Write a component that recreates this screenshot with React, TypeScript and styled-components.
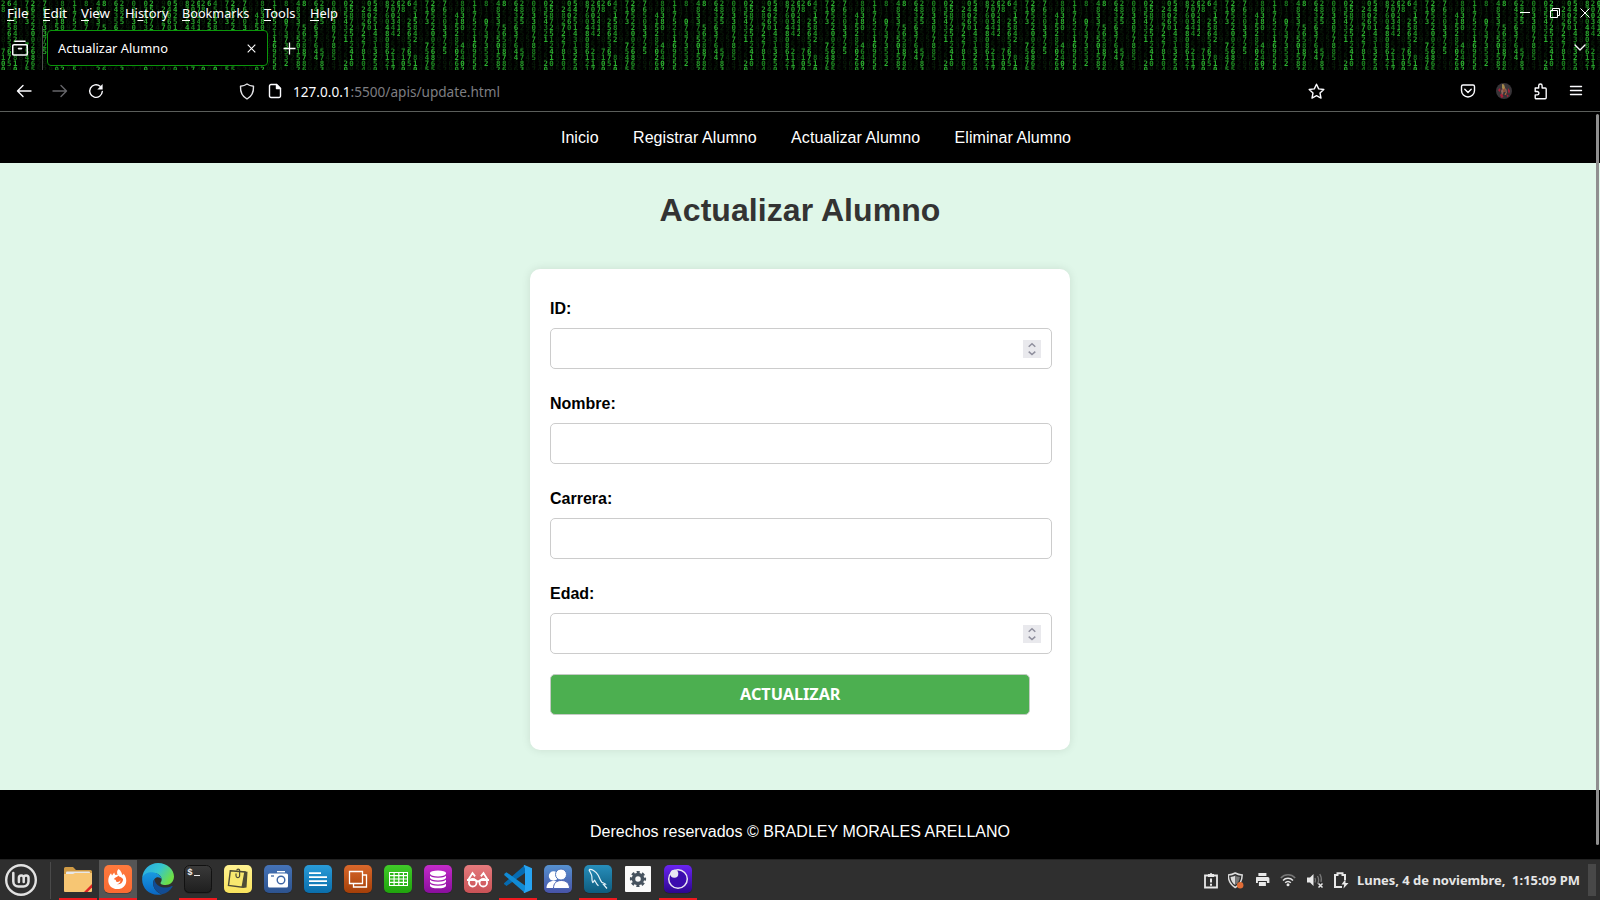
import React from "react";
import styled, { createGlobalStyle } from "styled-components";

const UI_FONT = `"Noto Sans", "Open Sans", sans-serif`;
const PAGE_FONT = `"Liberation Sans", Arial, sans-serif`;

const GlobalStyle = createGlobalStyle`
  * { box-sizing: border-box; }
  body { margin: 0; background: #000; overflow: hidden; }
  svg { display: block; flex: none; }
`;

const Desktop = styled.div`
  width: 1600px;
  height: 900px;
  display: flex;
  flex-direction: column;
  background: #000;
`;

/* ---------- browser chrome ---------- */

const TitleArea = styled.div`
  position: relative;
  height: 70px;
  display: flex;
  flex-direction: column;
  flex: none;
  overflow: hidden;
  color: #fff;
  font-family: ${UI_FONT};
`;

const RainBackdrop = styled.svg`
  position: absolute;
  inset: 0;
`;

const MenuRow = styled.div`
  position: relative;
  height: 26px;
  display: flex;
  padding-left: 7px;
`;

const MenuItem = styled.span<{ $slot: number }>`
  width: ${(p) => p.$slot}px;
  height: 26px;
  flex: none;
`;

const WindowButtons = styled.div`
  margin-left: auto;
  padding: 8px 10px 0 0;
  display: flex;
  gap: 20px;
`;

const TabRow = styled.div`
  position: relative;
  height: 44px;
  display: flex;
  align-items: flex-start;
`;

const ViewButton = styled.div`
  width: 43px;
  height: 44px;
  padding: 13px 0 0 12px;
  border-right: 1px solid #4a4f4a;
`;

const Tab = styled.div`
  margin: 4px 0 0 4px;
  width: 221px;
  height: 36px;
  display: flex;
  align-items: center;
  justify-content: space-between;
  padding: 0 11.5px 0 10px;
  border: 1px solid #0a960a;
  border-radius: 4px;
  background: #000;
`;

const NewTab = styled.div`
  padding: 16px 0 0 15px;
`;

const TabsMenu = styled.div`
  margin-left: auto;
  padding: 18px 14px 0 0;
`;

const Toolbar = styled.div`
  height: 42px;
  flex: none;
  display: flex;
  align-items: center;
  padding: 1px 16px 0 16px;
  border-bottom: 1px solid #5b5e5b;
  background: #000;
`;

const NavButtons = styled.div`
  display: flex;
  gap: 20px;
  width: 223px;
`;

const UrlBar = styled.div`
  display: flex;
  align-items: center;
  width: 1090px;
`;

const PageIcon = styled.svg`
  margin-left: 13px;
`;

const StarIcon = styled.svg`
  margin: 0 4px 0 auto;
`;

const UrlText = styled.div`
  margin-left: 11px;
`;

const ToolButtons = styled.div`
  display: flex;
  align-items: center;
  gap: 20px;
  margin-left: auto;
`;

/* ---------- web page ---------- */

const Page = styled.div`
  position: relative;
  height: 747px;
  flex: none;
  display: flex;
  flex-direction: column;
  background: #e0f7e9;
  font-family: ${PAGE_FONT};
`;

const Scrollbar = styled.div`
  position: absolute;
  right: 1px;
  top: 2px;
  width: 3px;
  height: 731px;
  border-radius: 2px;
  background: #8f8f8f;
`;

const SiteNav = styled.nav`
  height: 51px;
  display: flex;
  justify-content: center;
  gap: 34.4px;
  padding: 17px 0 0 32px;
  background: #000;
  color: #fff;
  font-size: 16px;
  line-height: 18px;
  letter-spacing: 0.06px;
`;

const Heading = styled.h1`
  margin: 29px 0 0;
  font-size: 32px;
  line-height: 37px;
  letter-spacing: 0.06px;
  text-align: center;
  color: #333;
`;

const FormCard = styled.form`
  width: 540px;
  height: 481px;
  margin: 40px auto;
  padding: 30px 20px 0;
  border-radius: 10px;
  background: #fff;
  box-shadow: 0 0 10px rgba(0, 0, 0, 0.1);
`;

const Field = styled.label`
  display: flex;
  flex-direction: column;
  height: 95px;
  font-size: 16px;
  font-weight: bold;
  line-height: 19px;
  color: #000;
`;

const Box = styled.span`
  display: flex;
  align-items: center;
  justify-content: flex-end;
  width: 502px;
  height: 41px;
  margin-top: 10px;
  padding-right: 10px;
  border: 1px solid #ccc;
  border-radius: 5px;
  background: #fff;
`;

const Submit = styled.button`
  display: flex;
  align-items: center;
  justify-content: center;
  width: 480px;
  height: 41px;
  margin-top: -5px;
  padding: 0 0 1px;
  border: 1px solid #c4cbc4;
  border-radius: 5px;
  background: #4caf50;
`;

const Footer = styled.footer`
  height: 69px;
  padding-top: 33px;
  background: #000;
  color: #fff;
  font-size: 16px;
  line-height: 18px;
  letter-spacing: 0.03px;
  text-align: center;
`;

/* ---------- desktop panel ---------- */

const Panel = styled.div`
  height: 41px;
  flex: none;
  display: flex;
  border-top: 1px solid #222;
  background: #2f2f2f;
`;

const StartButton = styled.div`
  width: 51px;
  height: 37px;
  margin: 2px 8px 0 0;
  padding: 2px 0 0 5px;
  border-right: 1px solid #4a4a4a;
`;

const Launchers = styled.div`
  display: flex;
  gap: 2px;
`;

const Launcher = styled.div<{ $open?: boolean; $active?: boolean }>`
  width: 38px;
  height: 40px;
  display: flex;
  align-items: center;
  justify-content: center;
  background: ${(p) => (p.$active ? "#555" : "transparent")};
  border-bottom: 2px solid ${(p) => (p.$open ? "#f0191f" : "transparent")};
`;

const Tray = styled.div`
  margin-left: auto;
  display: flex;
  align-items: center;
  gap: 10.4px;
`;

const Clock = styled.div`
  margin-left: -2.4px;
`;

const Corner = styled.div`
  width: 8px;
  height: 32px;
  margin: 4px 4px 0 8px;
  background: #484848;
`;

const TextSvg = styled.svg`
  overflow: visible;
`;

/* A line of interface text held to an exact advance width. */
function Label(props: {
  text?: string;
  width: number;
  size: number;
  height?: number;
  baseline: number;
  color?: string;
  weight?: number;
  underline?: [number, number];
  children?: React.ReactNode;
}) {
  return (
    <TextSvg width={props.width} height={props.height ?? 20}>
      <text
        x="0"
        y={props.baseline}
        textLength={props.width}
        lengthAdjust="spacingAndGlyphs"
        fontFamily={UI_FONT}
        fontSize={props.size}
        fontWeight={props.weight ?? 400}
        fill={props.color ?? "#fff"}
      >
        {props.children ?? props.text}
      </text>
      {props.underline && (
        <rect x={props.underline[0]} y={props.baseline + 2} width={props.underline[1]} height="1" fill="#fff" />
      )}
    </TextSvg>
  );
}

/* One string per column of the falling digits; a dot is a faded digit. */
const RAIN = [
  "28......7100", "6..25653675.", "4515842..810", "............", "7173...75475", "265220026865",
  "............", "765033725...", "............", "..4152850260", "80380..46402", "............",
  "117521169555", "............", "8..07373532.", "............", "483373501582", "8...56588786",
  "............", "6435637644..", "2825....5783", "............", "0033077885..", "............",
  "0354321...20", "25872512410.", "............", ".28272278104", "04060.......", "542514313250",
  "............", "876048086121", "200344..2117", "072412......",
];
const BRIGHT = ["#1f9423", "#27a52b", "#197f1d", "#2bb52f"];

function Rain() {
  return (
    <RainBackdrop width="1600" height="70" aria-hidden="true">
      <defs>
        <pattern id="rain" width="200" height="70" patternUnits="userSpaceOnUse">
          <rect width="200" height="70" fill="#000" />
          {RAIN.map((col, c) =>
            [...col].map((ch, r) => {
              const dim = ch === ".";
              return (
                <text
                  key={`${c}-${r}`}
                  x={3.3 + c * 5.93}
                  y={6.2 + r * 6}
                  textAnchor="middle"
                  fontFamily="DejaVu Sans Mono, monospace"
                  fontSize="7.4"
                  fontWeight={dim ? 400 : 700}
                  fill={dim ? ((c + r) % 3 ? "#061c07" : "#09290a") : BRIGHT[(c * 3 + (r >> 1)) % 4]}
                >
                  {dim ? (c * 7 + r * 3) % 10 : ch}
                </text>
              );
            })
          )}
        </pattern>
      </defs>
      <rect width="1600" height="70" fill="url(#rain)" />
    </RainBackdrop>
  );
}

const MENU: { text: string; slot: number; width: number; u: [number, number] }[] = [
  { text: "File", slot: 35.5, width: 21.5, u: [0, 7] },
  { text: "Edit", slot: 38.5, width: 24, u: [0, 7] },
  { text: "View", slot: 43.6, width: 29, u: [0, 8] },
  { text: "History", slot: 57.6, width: 43.5, u: [12.4, 6] },
  { text: "Bookmarks", slot: 82, width: 67.3, u: [0, 8] },
  { text: "Tools", slot: 45.6, width: 31.5, u: [0, 7] },
  { text: "Help", slot: 40, width: 28, u: [0, 9] },
];

const stroke = { fill: "none", stroke: "#fbfbfe", strokeWidth: 1.4, strokeLinecap: "round", strokeLinejoin: "round" } as const;

function Spinner() {
  return (
    <svg width="18" height="18" viewBox="0 0 18 18">
      <rect width="18" height="18" fill="#e9e9ed" />
      <path d="M5.7 6.8 9 3.8l3.3 3M5.7 11.6 9 14.6l3.3-3" fill="none" stroke="#8f8f9d" strokeWidth="1.5" />
    </svg>
  );
}

function Tile(props: { id: string; top: string; bottom: string; children?: React.ReactNode }) {
  return (
    <svg width="30" height="30" viewBox="0 0 30 30">
      <defs>
        <linearGradient id={props.id} x1="0" y1="0" x2="0" y2="1">
          <stop offset="0" stopColor={props.top} />
          <stop offset="1" stopColor={props.bottom} />
        </linearGradient>
      </defs>
      <rect x="1" y="1.6" width="28" height="28" rx="5" fill="#1c1c1c" opacity=".6" />
      <rect x="1" y="1" width="28" height="28" rx="5" fill={`url(#${props.id})`} />
      {props.children}
    </svg>
  );
}

function App() {
  return (
    <Desktop>
      <GlobalStyle />
      <TitleArea>
        <Rain />
        <MenuRow>
          {MENU.map((m) => (
            <MenuItem key={m.text} $slot={m.slot}>
              <Label text={m.text} width={m.width} size={13} height={26} baseline={18} underline={m.u} />
            </MenuItem>
          ))}
          <WindowButtons>
            <svg width="10" height="10"><path d="M0 4.5h10" stroke="#fff" /></svg>
            <svg width="10" height="10" fill="none" stroke="#fff"><path d="M.5 2.5h7v7h-7zM2.5 2.5v-2h7v7h-2" /></svg>
            <svg width="10" height="10"><path d="M.5.5l9 9M9.5.5l-9 9" stroke="#fff" /></svg>
          </WindowButtons>
        </MenuRow>
        <TabRow>
          <ViewButton>
            <svg width="16" height="18" viewBox="0 0 16 18" {...stroke} strokeWidth="1.6">
              <path d="M3 2.2h10M2 5.8h12a1.3 1.3 0 0 1 1.3 1.3v7.6a1.3 1.3 0 0 1-1.3 1.3H2A1.3 1.3 0 0 1 .7 14.7V7.1A1.3 1.3 0 0 1 2 5.8ZM6.5 9.6h3" />
            </svg>
          </ViewButton>
          <Tab>
            <Label text="Actualizar Alumno" width={110} size={13} baseline={15} />
            <svg width="9" height="9"><path d="M.7.7l7.6 7.6M8.3.7L.7 8.3" stroke="#fff" strokeWidth="1.1" /></svg>
          </Tab>
          <NewTab>
            <svg width="13" height="13"><path d="M6.5.5v12M.5 6.5h12" stroke="#fff" strokeWidth="1.3" /></svg>
          </NewTab>
          <TabsMenu>
            <svg width="12" height="8" {...stroke}><path d="M1 1l5 5 5-5" /></svg>
          </TabsMenu>
        </TabRow>
      </TitleArea>

      <Toolbar>
        <NavButtons>
          <svg width="16" height="16" {...stroke}><path d="M15 8H1.7M7 2.5L1.5 8 7 13.5" /></svg>
          <svg width="16" height="16" {...stroke} stroke="#66666a"><path d="M1 8h13.3M9 2.5L14.5 8 9 13.5" /></svg>
          <svg width="16" height="16" {...stroke}><path d="M14.3 8.5A6.3 6.3 0 1 1 12.1 3.3" /><path d="M14.6 1v5.4H9.3z" fill="#fbfbfe" stroke="none" /></svg>
        </NavButtons>
        <UrlBar>
          <svg width="16" height="17" {...stroke} stroke="#e3e3e6"><path d="M8 1c2 1.5 4 2 6.500 2.200C14.800 9 12.500 13.500 8 16 3.500 13.500 1.200 9 1.500 3.200 4 3 6 2.500 8 1z" /></svg>
          <PageIcon width="14" height="16" viewBox="0 0 14 16" {...stroke}><path d="M3 1.500h5.500l4 4V13a1.500 1.500 0 0 1-1.500 1.500H3A1.500 1.500 0 0 1 1.500 13V3A1.500 1.500 0 0 1 3 1.500z" /><path d="M8.500 1.500v4h4z" fill="#fff" /></PageIcon>
          <UrlText>
            <Label width={207} size={14.5} baseline={16} color="#7e7e82">
              <tspan fill="#fbfbfe">127.0.0.1</tspan>:5500/apis/update.html
            </Label>
          </UrlText>
          <StarIcon width="17" height="17" viewBox="0 0 17 17" {...stroke}><path d="M8.500 1.200l2.200 4.700 5.100.6-3.800 3.500 1 5.100-4.500-2.500L4 15.100l1-5.100L1.200 6.500l5.100-.6z" /></StarIcon>
        </UrlBar>
        <ToolButtons>
          <svg width="16" height="16" {...stroke}><path d="M3 2h10a1.500 1.500 0 0 1 1.500 1.500V7.500a6.500 6.500 0 0 1-13 0V3.500A1.500 1.500 0 0 1 3 2zM4.800 6.300L8 9.400l3.200-3.100" /></svg>
          <svg width="16" height="16">
            <circle cx="8" cy="8" r="8" fill="#383438" />
            <path d="M6 1l2 .5 1 3-1 2-2-1z" fill="#a38a4d" />
            <path d="M2 7l2-2 .5 2-1 2zM12 5l2 3-1 3-1-3zM4 12l2-2 1.500 4-2 1zM10.500 11l2.500 2-2 1z" fill="#a91f38" />
            <path d="M5 8l1.500-3 1 5-1.500 2zM9 5l1.500 1.500 .5 4-1.500-1z" fill="#95665a" />
            <path d="M8 5v4M9 12l1-2" stroke="#d06b38" />
          </svg>
          <svg width="16" height="17" viewBox="-.7 0 16 17" {...stroke}><path d="M2.500 5H6V2.700a1.700 1.700 0 0 1 3.400 0V5h3.100a1 1 0 0 1 1 1v8.800a1 1 0 0 1-1 1h-9a1 1 0 0 1-1-1v-2.900h2a1.700 1.700 0 0 0 0-3.400h-2V5z" /></svg>
          <svg width="16" height="16" {...stroke}><path d="M2.500 3.500h11M2.500 7.500h11M2.500 11.500h11" /></svg>
        </ToolButtons>
      </Toolbar>

      <Page>
        <SiteNav>
          <span>Inicio</span>
          <span>Registrar Alumno</span>
          <span>Actualizar Alumno</span>
          <span>Eliminar Alumno</span>
        </SiteNav>
        <Heading>Actualizar Alumno</Heading>
        <FormCard>
          <Field>ID:<Box><Spinner /></Box></Field>
          <Field>Nombre:<Box /></Field>
          <Field>Carrera:<Box /></Field>
          <Field>Edad:<Box><Spinner /></Box></Field>
          <Submit type="button">
            <Label text="ACTUALIZAR" width={100.5} size={16} baseline={16} weight={700} />
          </Submit>
        </FormCard>
        <Footer>Derechos reservados © BRADLEY MORALES ARELLANO</Footer>
        <Scrollbar />
      </Page>

      <Panel>
        <StartButton>
          <svg width="32" height="32" viewBox="0 0 32 32" fill="none" stroke="#e2e2e2">
            <circle cx="16" cy="16" r="14.8" strokeWidth="2.4" />
            <path d="M8.300 9v8.500a5 5 0 0 0 5 5h5.200a5 5 0 0 0 5-5v-3.700a2.400 2.400 0 0 0-4.800 0V18M18.700 13.800a2.400 2.400 0 0 0-4.800 0V18" strokeWidth="2.5" strokeLinecap="round" />
          </svg>
        </StartButton>
        <Launchers>
          <Launcher $open>
            <svg width="28" height="26" viewBox="0 0 28 26">
              <path d="M0 2.500A1.500 1.500 0 0 1 1.500 1H9l3 3h14.500A1.500 1.500 0 0 1 28 5.500V12H0z" fill="#cf9a45" />
              <rect x="2" y="5.5" width="24" height="4" rx="1" fill="#e8e8e8" />
              <path d="M0 8h9l2-1h17v18a1 1 0 0 1-1 1H1a1 1 0 0 1-1-1z" fill="#f7c673" />
              <path d="M20 26l8-8v3.500L23.500 26z" fill="#dd2525" />
            </svg>
          </Launcher>
          <Launcher $open $active>
            <Tile id="ff" top="#ff7a3d" bottom="#fb6a32">
              <path d="M15.500 5c3 2 3 4.500 4.200 6.200l1-1.500c4.500 5.500 3.200 14-4.500 15.200C9.500 26 5 21.500 5.300 16c.1-3 1.500-5.200 2.700-6.800l1 2.200 2.200-3 .9 2.500c1-.3 2-.2 2.700.1C13.500 9 14 6.500 15.500 5z" fill="#fff" />
              <path d="M15.200 11.500c-1 2-3.200 1.700-4.400 3.700 2 .1 2.400 1.300 2.200 2.300 2 .9 3.800.2 4.300-1.500.4 2.600-1.300 4-3.400 4.200 2.700.6 5.500-.8 6.200-4.400-.1-2.400-3-2.300-4.900-4.300z" fill="#fb6a32" />
            </Tile>
          </Launcher>
          <Launcher>
            <svg width="32" height="32" viewBox="0 0 32 32">
              <defs>
                <linearGradient id="edgeTop" x1="0" y1="0" x2="1" y2=".5"><stop offset="0" stopColor="#28a7e6" /><stop offset=".55" stopColor="#35c5d0" /><stop offset="1" stopColor="#6ddf48" /></linearGradient>
                <linearGradient id="edgeLow" x1="0" y1="0" x2="0" y2="1"><stop offset="0" stopColor="#199ae0" /><stop offset="1" stopColor="#0a67c4" /></linearGradient>
              </defs>
              <path d="M.2 15C.8 6.500 7.500 0 16 0c9.500 0 16 6.500 16 13.500 0 5-3.800 8.500-8.500 8.500-4 0-5.500-1.300-4.800-2.500C21.800 15.500 17.500 10 12 10 7 10 2.500 11.500.2 15z" fill="url(#edgeTop)" />
              <path d="M.2 15C1.500 10.500 7 8.500 12 9.500c4.500 1 7.500 4 7.700 7-1.500-2.300-5-3.200-7.200-.5C9 20 12 29 20 31.200 9 34-.8 26 .2 15z" fill="url(#edgeLow)" />
              <path d="M12.500 16c-3.500 5 0 12.800 7.500 15.200 4.800-1 8.500-4 10.500-7.500.3-.6-.3-.9-.8-.6C22 26.800 13 23.500 12.500 16z" fill="#124c93" />
            </svg>
          </Launcher>
          <Launcher $open>
            <Tile id="term" top="#3a3a3a" bottom="#1e1e1e">
              <rect x="1.5" y="1.5" width="27" height="27" rx="5" fill="none" stroke="#111" />
              <text x="4.2" y="10.5" fill="#eee" fontFamily="Liberation Mono, monospace" fontWeight="700" fontSize="9">$</text>
              <path d="M11 11.500h6" stroke="#eee" />
            </Tile>
          </Launcher>
          <Launcher>
            <Tile id="note" top="#fff291" bottom="#f8e35d">
              <path d="M17 7l7.500.8-1 15.700-3.500.5-3-3z" fill="#4e4c36" />
              <path d="M7.300 6.800L22 8l-2.800 15.200L5.500 21.500z" fill="#f8e86f" stroke="#4e4c36" strokeWidth="1.4" />
              <path d="M13 9.500v2.300a1.800 1.800 0 0 0 3.600 0V6.500a1.400 1.400 0 0 0-2.800 0" fill="none" stroke="#4e4c36" strokeWidth="1.2" />
            </Tile>
          </Launcher>
          <Launcher>
            <Tile id="cam" top="#4573b7" bottom="#2d538f">
              <path d="M14 7.700h8" stroke="#fff" strokeWidth="1.4" />
              <rect x="5" y="9.5" width="20" height="14" rx="1.5" fill="#fff" />
              <circle cx="18" cy="16" r="3.8" fill="none" stroke="#3d65a5" strokeWidth="1.4" />
              <path d="M8 12h3" stroke="#3d65a5" strokeWidth="1.3" />
            </Tile>
          </Launcher>
          <Launcher>
            <Tile id="doc" top="#299bd8" bottom="#0a6eab">
              <path d="M6 9.200h12M6 13.100h18M6 17.100h18M6 21.100h18" stroke="#fff" strokeWidth="1.8" />
            </Tile>
          </Launcher>
          <Launcher>
            <Tile id="slides" top="#d9682b" bottom="#a53f08">
              <path d="M6.500 7.500h13v12h-13zM10.500 20v3h13V11h-3.500" fill="none" stroke="#fff" strokeWidth="1.3" />
            </Tile>
          </Launcher>
          <Launcher>
            <Tile id="calc" top="#40cb29" bottom="#20a30d">
              <rect x="6" y="8" width="19" height="14" fill="#fff" />
              <path d="M7 10h3.500M11.700 10h3.500M16.400 10h3.500M21 10h3M7 13.300h3.500M11.700 13.300h3.500M16.400 13.300h3.500M21 13.300h3M7 16.700h3.500M11.700 16.700h3.500M16.400 16.700h3.500M21 16.700h3M7 20h3.500M11.700 20h3.500M16.400 20h3.500M21 20h3" stroke="#2eb71a" strokeWidth="2.2" />
            </Tile>
          </Launcher>
          <Launcher>
            <Tile id="db" top="#c42bc9" bottom="#890e9d">
              <path d="M7 9v12.500c0 2 3.500 2.800 8 2.800s8-.8 8-2.800V9z" fill="#fff" />
              <ellipse cx="15" cy="9" rx="8" ry="2.6" fill="#fff" />
              <path d="M7 10.500c1 3.400 15 3.400 16 0M7 14.500c1 3.400 15 3.400 16 0M7 18.500c1 3.400 15 3.400 16 0" fill="none" stroke="#a31bb2" strokeWidth="1.2" />
            </Tile>
          </Launcher>
          <Launcher>
            <Tile id="read" top="#e57a7d" bottom="#c95256">
              <g fill="none" stroke="#fff" strokeWidth="1.8">
                <circle cx="9.7" cy="18.7" r="3.8" /><circle cx="20.3" cy="18.7" r="3.8" />
                <path d="M4 16h7.500c1.800 0 2 1.500 3.500 1.500s1.700-1.500 3.500-1.500H26M5.500 15.500L9.500 9l2.600 3.400M24.500 15.500L20.500 9l-2.600 3.400" />
              </g>
            </Tile>
          </Launcher>
          <Launcher $open>
            <svg width="28" height="28" viewBox="0 0 28 28">
              <path d="M21 0v8L2.500 21 .3 19.200a.8.8 0 0 1 0-1.300z" fill="#066bb1" />
              <path d="M.2 9L2.400 7.200 21 20.500V28L.4 10.200z" fill="#118bd5" />
              <path d="M20.500 0L28 3.200v21.600L20.500 28c-.8.2-1 0-.7-.5l1.200-3V3.500L19.800.5c-.2-.5.2-.6.7-.5z" fill="#27a4f2" />
            </svg>
          </Launcher>
          <Launcher>
            <Tile id="users" top="#5691cf" bottom="#4753a8">
              <g fill="#fff">
                <circle cx="10.5" cy="12" r="4.7" /><path d="M3.500 24c0-4.500 3-7 7-7s6 2 6 7z" />
                <circle cx="18" cy="10.5" r="5.5" stroke="#4e75bc" /><path d="M10.500 24.500c0-5.500 3-8 7.800-8s8.200 2.500 8.200 8z" stroke="#4a64b3" />
              </g>
            </Tile>
          </Launcher>
          <Launcher $open>
            <Tile id="sql" top="#278ebb" bottom="#0e5c7e">
              <path d="M6 5.500c3-.6 7 2 9 5.500 1.500 2.500 2 5.500 3.800 7.200 1 .8 2.700 1 3.700 2l-2 .3 3.500 4M6 5.500c.5 2 2.300 4 2.800 6.500.4 2.500-.3 5 1 6.500 1.100-.3 1.200-2 1.700-2.300 1 1 1.800 4 4 5.500" fill="none" stroke="#e8f4fa" strokeWidth="1.2" />
            </Tile>
          </Launcher>
          <Launcher>
            <svg width="26" height="26" viewBox="0 0 26 26">
              <rect width="26" height="26" rx="1" fill="#fafafa" />
              <circle cx="13" cy="13" r="4.5" fill="none" stroke="#46525e" strokeWidth="3.5" />
              <circle cx="13" cy="13" r="6.8" fill="none" stroke="#46525e" strokeWidth="2.6" strokeDasharray="3 2.34" strokeDashoffset="1.5" />
            </svg>
          </Launcher>
          <Launcher $open>
            <Tile id="insomnia" top="#6a24f2" bottom="#2d068f">
              <circle cx="15" cy="15" r="9.3" fill="#3b0cae" stroke="#e7e5f2" strokeWidth="1.5" />
              <circle cx="11.3" cy="9.8" r="4" fill="#e7e5f2" />
            </Tile>
          </Launcher>
        </Launchers>
        <Tray>
          <svg width="14" height="17" viewBox="0 0 14 17"><path d="M1 3.500h12v12H1z" fill="none" stroke="#e8e8e8" strokeWidth="1.8" /><path d="M4 2h2a1 1 0 0 1 2 0h2v3H4z" fill="#e8e8e8" /><path d="M7 6.500v4M7 11.700v2" stroke="#e8e8e8" strokeWidth="2" /></svg>
          <svg width="17" height="17" viewBox="0.8 0 17 17"><path d="M8 1c2.500 1.500 4.500 1.900 7 2-.1 5.500-2 9.500-7 12.500C3 12.500 1.100 8.500 1 3c2.500-.1 4.500-.5 7-2z" fill="#2f2f2f" stroke="#dcdcdc" strokeWidth="1.5" /><path d="M8 3.500v9.500C5 11 3.700 8.500 3.300 5 5 4.900 6.500 4.500 8 3.500z" fill="#dcdcdc" /><path d="M8 3.500v9.500c3-2 4.300-4.500 4.700-8-1.700-.1-3.200-.5-4.700-1.500z" fill="#777" /><circle cx="13" cy="13.3" r="3.2" fill="#e06c36" /></svg>
          <svg width="14" height="14" viewBox="0.6 0 14 14" fill="#e8e8e8"><path d="M3 0h8v3H3zM1.500 4h11A1.500 1.500 0 0 1 14 5.500V10h-2.500V8h-9v2H0V5.500A1.500 1.500 0 0 1 1.500 4zM3.500 9h7v4h-7z" /></svg>
          <svg width="16" height="14" viewBox="0 0 16 14" fill="none" strokeWidth="1.5"><path d="M.8 5c4-4.300 10.400-4.300 14.400 0" stroke="#777" /><path d="M3 7.500c2.800-3 7.200-3 10 0M5.200 9.800c1.600-1.700 4-1.700 5.600 0" stroke="#e8e8e8" /><circle cx="8" cy="11.8" r="1.5" fill="#e8e8e8" /></svg>
          <svg width="17" height="15" viewBox="0.5 0 17 15"><path d="M.5 4.500h3L7 1v12L3.500 9.500h-3z" fill="#e8e8e8" /><path d="M8.500 5c.8 1.500.8 3 0 4.500M11 3c1.500 2.600 1.500 5.400 0 8M13.300 1c1.500 2.600 2 5.400 1.200 8" stroke="#777" strokeWidth="1.3" fill="none" /><path d="M12 10.500l4 4M16 10.500l-4 4" stroke="#e8e8e8" strokeWidth="1.5" /></svg>
          <svg width="15" height="17" viewBox="0 0 15 17"><path d="M8 15H1V3h2.500V1.200h5V3H11v5" fill="none" stroke="#e8e8e8" strokeWidth="2" /><path d="M11.500 7l-4 5.500h2.700L9.500 16.500 14.500 11h-3z" fill="#e8e8e8" /></svg>
          <Clock>
            <Label text={"Lunes, 4 de noviembre,\u00a0 1:15:09 PM"} width={223} size={13} baseline={15} weight={700} color="#e6e6e6" />
          </Clock>
        </Tray>
        <Corner />
      </Panel>
    </Desktop>
  );
}

export default App;
